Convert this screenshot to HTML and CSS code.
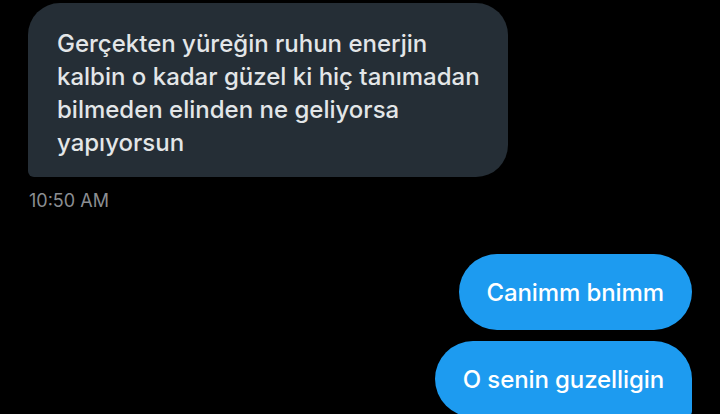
FILE: index.html
```html
<!DOCTYPE html>
<html lang="tr">
<head>
<meta charset="utf-8">
<link rel="stylesheet" href="styles.css">
</head>
<body>
<div class="chat">
  <div class="received">
    <div class="bubble-in">Gerçekten yüreğin ruhun enerjin<br>kalbin o kadar güzel ki hiç tanımadan<br>bilmeden elinden ne geliyorsa<br>yapıyorsun</div>
    <div class="time">10:50 AM</div>
  </div>
  <div class="sent">
    <div class="bubble-out">Canimm bnimm</div>
    <div class="bubble-out last">O senin guzelligin</div>
  </div>
</div>
</body>
</html>
```

FILE: styles.css
```css
html, body {
  margin: 0;
  padding: 0;
  background: #000;
  width: 720px;
  height: 414px;
  overflow: hidden;
}
.chat {
  font-family: Inter, "Noto Sans", sans-serif;
  display: flex;
  flex-direction: column;
  padding: 3px 28px 0 28px;
}
.received {
  display: flex;
  flex-direction: column;
  align-items: flex-start;
}
.bubble-in {
  box-sizing: border-box;
  width: 480px;
  height: 174px;
  background: #252e36;
  color: #e3e6e8;
  border-radius: 32px 32px 32px 6px;
  padding: 24px 20px 0 29px;
  font-size: 24px;
  font-weight: 500;
  letter-spacing: 0;
  line-height: 33px;
  white-space: nowrap;
}
.time {
  margin-top: 13px;
  color: #8b8e92;
  font-size: 18px;
  font-weight: 400;
  line-height: 22px;
  padding-left: 1px;
}
.sent {
  margin-top: 42px;
  display: flex;
  flex-direction: column;
  align-items: flex-end;
  gap: 11px;
}
.bubble-out {
  box-sizing: border-box;
  height: 76px;
  display: flex;
  align-items: center;
  padding: 0 28px;
  background: #1d9bf0;
  color: #fff;
  border-radius: 38px;
  font-size: 24px;
  font-weight: 500;
  letter-spacing: -0.1px;
}
.bubble-out.last {
  border-radius: 38px 38px 6px 38px;
}
```
